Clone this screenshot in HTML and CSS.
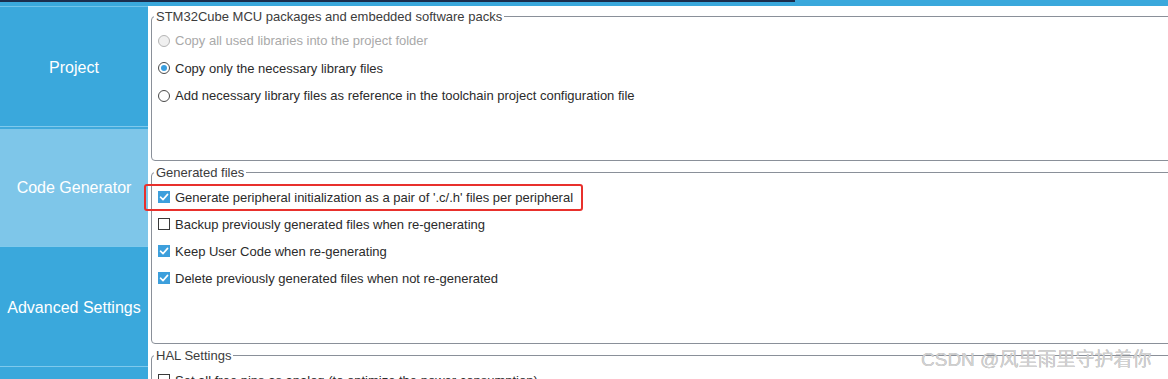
FILE: index.html
```html
<!DOCTYPE html>
<html lang="en">
<head>
  <meta charset="UTF-8">
  <title>Project Manager - Code Generator</title>
  <link rel="stylesheet" href="styles.css">
</head>
<body>
  <div class="topbar"><div class="tab-line"></div></div>

  <div class="main">
    <nav class="sidebar">
      <div class="side-item">Project</div>
      <div class="side-item active">Code Generator</div>
      <div class="side-item">Advanced Settings</div>
      <div class="side-item"></div>
    </nav>

    <div class="content">
      <fieldset class="group group-packs">
        <legend>STM32Cube MCU packages and embedded software packs</legend>
        <div class="row disabled">
          <span class="radio"></span>Copy all used libraries into the project folder
        </div>
        <div class="row">
          <span class="radio on"></span>Copy only the necessary library files
        </div>
        <div class="row">
          <span class="radio"></span>Add necessary library files as reference in the toolchain project configuration file
        </div>
      </fieldset>

      <fieldset class="group group-files">
        <legend>Generated files</legend>
        <div class="row highlight">
          <span class="check on"><svg viewBox="0 0 12 12"><path d="M2.5 6.2 L5 8.6 L9.6 3.4" /></svg></span>Generate peripheral initialization as a pair of '.c/.h' files per peripheral
        </div>
        <div class="row">
          <span class="check"></span>Backup previously generated files when re-generating
        </div>
        <div class="row">
          <span class="check on"><svg viewBox="0 0 12 12"><path d="M2.5 6.2 L5 8.6 L9.6 3.4" /></svg></span>Keep User Code when re-generating
        </div>
        <div class="row">
          <span class="check on"><svg viewBox="0 0 12 12"><path d="M2.5 6.2 L5 8.6 L9.6 3.4" /></svg></span>Delete previously generated files when not re-generated
        </div>
      </fieldset>

      <fieldset class="group group-hal">
        <legend>HAL Settings</legend>
        <div class="row">
          <span class="check"></span>Set all free pins as analog (to optimize the power consumption)
        </div>
      </fieldset>
    </div>
  </div>

  <div class="watermark">CSDN @风里雨里守护着你</div>
</body>
</html>
```

FILE: styles.css
```css
body { margin: 0; background: #fff; font-family: "Liberation Sans", Arial, "Noto Sans CJK SC", sans-serif; color: #2b2b2b; overflow: hidden; height: 379px; }

.topbar { height: 6px; background: #3aa8dc; }
.tab-line { width: 795px; height: 2px; background: #1b2d4d; }

.main { display: flex; }
.sidebar { width: 148px; flex: none; border-top: 1px solid #71c3ea; }
.side-item { height: 117px; display: flex; align-items: center; justify-content: center; background: #3aa8dc; color: #fff; font-size: 16px; border-bottom: 1px solid #7fc9ec; border-top: 2px solid #3aa8dc; }
.side-item:first-child { border-top: 0; padding-top: 2px; height: 117px; }
.side-item.active { background: #7ec6e9; border-top-color: #3fa9dc; }

.content { flex: 1; padding: 3px 0 0 3px; }

.group { margin: 0 -20px 4px 0; padding: 0 0 0 6px; border: 1px solid #8a9099; border-radius: 4px; font-size: 13px; }
.group legend { margin-left: -4px; padding: 0 2px; line-height: 15px; color: #3c3c3c; }
.group-packs { padding-top: 3px; padding-bottom: 50px; }
.group-packs .row { height: 27.5px; }
.group-files { padding-top: 4px; padding-bottom: 51px; }
.group-hal { padding-top: 4px; }

.row { display: flex; align-items: center; height: 27px; white-space: nowrap; }
.row.disabled { color: #a9a9a9; }
.row.highlight { box-sizing: border-box; width: fit-content; margin-left: -14px; padding: 0 8px 0 12px; border: 2px solid #e8302c; border-radius: 3px; }

.radio, .check { flex: none; box-sizing: border-box; width: 12px; height: 12px; margin-right: 5px; background: #fff; }
.radio { border: 1px solid #4a4a4a; border-radius: 50%; position: relative; }
.disabled .radio { border-color: #b5b5b5; background: #f0f0f0; }
.radio.on::after { content: ""; position: absolute; left: 2px; top: 2px; width: 6px; height: 6px; border-radius: 50%; background: #3a9ede; }
.check { border: 1px solid #3a3a3a; }
.check.on { border: 0; background: #3d9fdc; }
.check svg { display: block; width: 12px; height: 12px; }
.check path { fill: none; stroke: #fff; stroke-width: 1.6; stroke-linecap: round; stroke-linejoin: round; }

.watermark { position: absolute; left: 921px; top: 348px; font-size: 19px; line-height: 24px; color: #d2d2d2; text-shadow: 0 0 0.6px #9a9a9a; }
```
